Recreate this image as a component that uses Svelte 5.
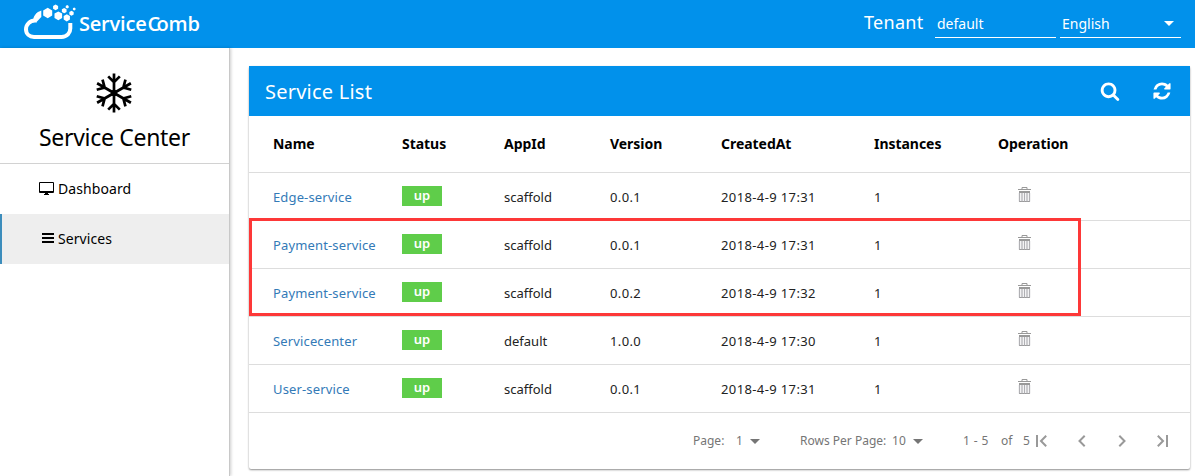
<script>
  const columns = ['Name', 'Status', 'AppId', 'Version', 'CreatedAt', 'Instances', 'Operation'];
  const services = [
    { name: 'Edge-service', app: 'scaffold', version: '0.0.1', created: '2018-4-9 17:31' },
    { name: 'Payment-service', app: 'scaffold', version: '0.0.1', created: '2018-4-9 17:31' },
    { name: 'Payment-service', app: 'scaffold', version: '0.0.2', created: '2018-4-9 17:32' },
    { name: 'Servicecenter', app: 'default', version: '1.0.0', created: '2018-4-9 17:30' },
    { name: 'User-service', app: 'scaffold', version: '0.0.1', created: '2018-4-9 17:31' }
  ];
  const cells = [
    [47.7, 13, 5.2], [55.6, 7.4, 2.9], [58.3, 15.8, 4.4], [64.2, 10.6, 2.7],
    [67.2, 6.8, 1.7], [66.8, 17.8, 3.6], [71.5, 13.3, 2.5], [74.2, 9.1, 1.5]
  ];
  const hex = ([x, y, r]) =>
    [0, 1, 2, 3, 4, 5]
      .map((i) => `${x + r * Math.sin((i * Math.PI) / 3)},${y - r * Math.cos((i * Math.PI) / 3)}`)
      .join(' ');
</script>

<div class="app">
  <header class="top">
    <svg class="cloud" width="79" height="48" viewBox="0 0 79 48">
      <path d="M39.5 13.5C36.5 15.5 35.3 18 35 20.6C30 20.6 26 24.6 26 29.3C26 34 29.5 36.9 34 36.9H61.5C67 36.9 70.3 33 70.3 28.5V23" fill="none" stroke="#fff" stroke-width="4" />
      <path d="M41.3 10.5V17L37 21.5L33.5 19.5C34.5 15 37.5 11.8 41.3 10.5Z" fill="#fff" />
      {#each cells as c}<polygon points={hex(c)} fill="#fff" />{/each}
    </svg>
    <div class="brand">Service<span class="big-c">C</span>omb</div>
    <div class="tenant">Tenant</div>
    <div class="field default">default</div>
    <div class="field lang">English
      <svg width="10" height="5" viewBox="0 0 10 5"><path d="M0 0H10L5 5Z" fill="#fff" /></svg>
    </div>
  </header>

  <div class="body">
    <aside>
      <div class="center">
        <svg width="40" height="40" viewBox="-20 -20 40 40" fill="none" stroke="#000" stroke-width="2.7">
          {#each [0, 60, 120, 180, 240, 300] as a}
            <path transform="rotate({a})" d="M0 0V-19.5M-5.8 -16.6L0 -10.8L5.8 -16.6" />
          {/each}
          <circle r="3.2" fill="#000" stroke="none" />
        </svg>
        <h1>Service Center</h1>
      </div>
      <nav>
        <div class="item">
          <svg width="15" height="13" viewBox="0 0 15 13">
            <path fill-rule="evenodd" d="M1 0H14Q15 0 15 1V10Q15 11 14 11H9V12H10V13H5V12H6V11H1Q0 11 0 10V1Q0 0 1 0ZM1 1V9H14V1Z" />
          </svg>
          <span class="dash">Dashboard</span>
        </div>
        <div class="item active">
          <svg class="bars" width="12" height="10" viewBox="0 0 12 10"><path d="M0 0H12V2H0ZM0 4H12V6H0ZM0 8H12V10H0Z" /></svg>
          <span class="serv">Services</span>
        </div>
      </nav>
    </aside>

    <main>
      <section class="panel">
        <div class="title">
          <h2>Service List</h2>
          <svg class="search" width="20" height="20" viewBox="0 0 1792 1792"><path fill="#fff" d="M1216 832q0-185-131.5-316.5T768 384 451.5 515.5 320 832t131.5 316.5T768 1280t316.5-131.5T1216 832zm512 832q0 52-38 90t-90 38q-54 0-90-38l-343-342q-179 124-399 124-143 0-273.5-55.5t-225-150-150-225T64 832t55.5-273.5 150-225 225-150T768 128t273.5 55.5 225 150 150 225T1472 832q0 220-124 399l343 343q37 37 37 90z" /></svg>
          <svg width="20" height="20" viewBox="0 0 1792 1792"><path fill="#fff" d="M1639 1056q0 5-1 7-64 268-268 434.5T892 1664q-146 0-282.5-55T366 1452l-129 129q-19 19-45 19t-45-19-19-45v-448q0-26 19-45t45-19h448q26 0 45 19t19 45-19 45l-137 137q71 66 161 102t187 36q134 0 250-65t186-179q11-17 53-117 8-23 30-23h192q13 0 22.5 9.5t9.5 22.5zm25-800v448q0 26-19 45t-45 19h-448q-26 0-45-19t-19-45 19-45l138-138Q1097 384 896 384q-134 0-250 65T460 628q-11 17-53 117-8 23-30 23H178q-13 0-22.5-9.5T146 736v-7q65-268 270-434.5T896 128q146 0 284 55.5T1425 340l130-129q19-19 45-19t45 19 19 45z" /></svg>
        </div>
        <div class="row head">
          {#each columns as c}<div>{c}</div>{/each}
        </div>
        {#each services as s}
          <div class="row">
            <div class="link">{s.name}</div>
            <div class="status"><span class="badge">up</span></div>
            <div>{s.app}</div>
            <div class="num">{s.version}</div>
            <div class="num">{s.created}</div>
            <div class="num">1</div>
            <div class="op">
              <svg width="13" height="16" viewBox="0 0 13 16">
                <path d="M4 2.5V.5H9V2.5" fill="none" stroke="#999" />
                <path d="M0 2H13V3H0ZM1 4H12V6H1ZM1 14H12V15H1Z" fill="#999" />
                <path d="M1.5 6V14.5M4 6V14.5M6.5 6V14.5M9 6V14.5M11.5 6V14.5" stroke="#b0b0b4" stroke-width="1.3" />
              </svg>
            </div>
          </div>
        {/each}
        <div class="pager">
          <span class="pg">Page:</span><span class="one">1</span>
          <svg class="caret" width="10" height="5" viewBox="0 0 10 5"><path d="M0 0H10L5 5Z" /></svg>
          <span class="rpp">Rows Per Page:</span><span class="ten">10</span>
          <svg class="caret" width="10" height="5" viewBox="0 0 10 5"><path d="M0 0H10L5 5Z" /></svg>
          <span class="range">1 - 5</span><span class="of">of</span><span class="total">5</span>
          <div class="arrows">
            <svg width="12" height="12" viewBox="0 0 12 12"><path d="M1 0V12M10.2 .8L5 6L10.2 11.2" /></svg>
            <svg width="12" height="12" viewBox="0 0 12 12"><path d="M8.7 .8L3.5 6L8.7 11.2" /></svg>
            <svg width="12" height="12" viewBox="0 0 12 12"><path d="M3.3 .8L8.5 6L3.3 11.2" /></svg>
            <svg width="12" height="12" viewBox="0 0 12 12"><path d="M11 0V12M1.8 .8L7 6L1.8 11.2" /></svg>
          </div>
        </div>
        <div class="marker"></div>
      </section>
    </main>
  </div>
</div>

<style>
  :global(body) { margin: 0; background: #fff; }
  .app {
    width: 1195px; height: 476px; overflow: hidden; display: flex; flex-direction: column;
    font-family: 'Noto Sans', 'Open Sans', sans-serif; font-size: 13px; color: #222; white-space: nowrap;
  }
  svg { display: block; flex: none; }
  .top { height: 48px; flex: none; display: flex; background: #0191eb; color: #fff; }
  .brand { font: 600 20px/48px 'Open Sans', sans-serif; flex: 1; letter-spacing: -.2px; }
  .big-c { margin-left: 1px; letter-spacing: -3.6px; }
  .tenant { font-size: 18px; line-height: 44px; width: 71px; letter-spacing: .3px; }
  .field {
    width: 119px; height: 22px; margin: 15px 4px 0 0; padding-left: 2px; line-height: 18px; font-size: 14px;
    border-bottom: 1px solid #fff;
  }
  .lang { margin-right: 14px; display: flex; justify-content: space-between; }
  .lang svg { margin: 6px 7px 0 0; }
  .body { flex: 1; display: flex; min-height: 0; }
  aside { width: 229px; flex: none; border-right: 1px solid #c8c8c8; box-shadow: 1px 0 3px rgba(0, 0, 0, .2); }
  .center { height: 115px; border-bottom: 1px solid #d2d2d2; display: flex; flex-direction: column; align-items: center; }
  .center svg { margin: 25px 1px 0 0; }
  h1 { margin: 7px 0 0; font-size: 23px; line-height: 34px; font-weight: 400; color: #000; letter-spacing: -.3px; }
  .item { height: 50px; display: flex; align-items: center; padding-left: 39px; gap: 4px; font-size: 14px; color: #000; }
  .item svg { margin-bottom: 2px; }
  .item span { line-height: 20px; padding-bottom: 1px; letter-spacing: .08px; }
  .active { background: #eee; border-left: 2px solid #3c8dbc; padding-left: 40px; }
  main { flex: 1; padding: 18px 0 0 19px; }
  .panel { position: relative; width: 941px; height: 403px; box-shadow: 0 1px 2px rgba(0, 0, 0, .45); border-radius: 2px; }
  .title { height: 50px; background: #0191eb; color: #fff; display: flex; align-items: center; padding: 0 18px 0 16px; }
  h2 { flex: 1; margin: 0; font-size: 20px; font-weight: 400; line-height: 51px; letter-spacing: .23px; }
  .search { margin-right: 32px; }
  .row {
    height: 47px; border-bottom: 1px solid #ddd; padding-left: 24px; display: grid;
    grid-template-columns: 129px 102px 106px 111px 153px 124px 1fr; line-height: 48px;
  }
  .head { height: 56px; line-height: 56px; font-weight: 700; font-size: 14px; color: #000; letter-spacing: -.04px; }
  .link { color: #337ab7; letter-spacing: .14px; }
  .num { letter-spacing: .38px; }
  .badge {
    display: block; width: 40px; height: 20px; margin-top: 13px; background: #5fcd4a; color: #fff;
    font-weight: 600; font-size: 13px; line-height: 19px; text-align: center;
  }
  .op svg { margin: 14px 0 0 20px; }
  .pager { height: 56px; display: flex; align-items: center; padding-left: 444px; font-size: 12px; color: #757575; }
  .pager span { line-height: 16px; padding-bottom: 1px; }
  .pg { width: 43px; }
  .one { width: 14px; }
  .caret { fill: #757575; }
  .rpp { margin-left: 40px; width: 92px; }
  .ten { width: 21px; letter-spacing: .2px; }
  .range { margin-left: 40px; width: 38px; letter-spacing: .4px; }
  .of { width: 22px; }
  .total { width: 13px; }
  .arrows { display: flex; gap: 28px; fill: none; stroke: #999; stroke-width: 2; }
  .marker { position: absolute; left: 0; top: 152px; width: 826px; height: 92px; border: 3px solid #fd3838; }
</style>
